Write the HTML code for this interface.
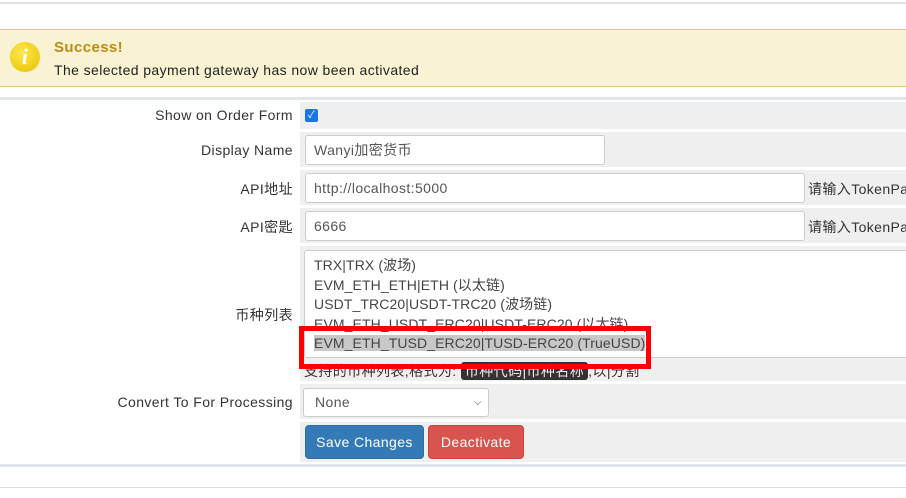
<!DOCTYPE html>
<html><head><meta charset="utf-8"><style>
*{box-sizing:border-box;margin:0;padding:0}
body{width:906px;height:498px;background:#fff;font-family:"Liberation Sans","Noto Sans CJK SC",sans-serif;font-size:14px;color:#333;position:relative;overflow:hidden;letter-spacing:0.4px}
.a{position:absolute}
.lbl{position:absolute;left:0;width:293px;text-align:right;font-size:14px;color:#333}
.cell{position:absolute;left:300px;width:606px;background:#efefef}
.inp{position:absolute;background:#fff;border:1px solid #ccc;border-radius:3px;font-size:14px;color:#555;padding-left:8px}
.tp{position:absolute;left:808px;font-size:14px;color:#333;white-space:nowrap}
</style></head><body>
<div class="a" style="left:0;top:2px;width:906px;height:2px;background:#e4e4e4"></div>
<div class="a" style="left:0;top:29px;width:906px;height:58px;background:#f9f3d3;border-top:1px solid #e8c878;border-bottom:1px solid #e8c878"></div>
<div class="a" style="left:10px;top:42px;width:30px;height:30px;border-radius:50%;background:radial-gradient(circle at 40% 35%,#ffe84a,#e6c000);color:#fff;font:italic bold 22px 'Liberation Serif',serif;text-align:center;line-height:30px">i</div>
<div class="a" style="left:54px;top:39px;font-size:15px;font-weight:bold;color:#c08a10">Success!</div>
<div class="a" style="left:54px;top:62px;font-size:14px;color:#222">The selected payment gateway has now been activated</div>
<div class="a" style="left:0;top:97px;width:906px;height:3px;background:#e2e6e9"></div>

<div class="lbl" style="top:107px">Show on Order Form</div>
<div class="cell" style="top:102px;height:27px"></div>
<div class="a" style="left:305px;top:109px;width:13px;height:13px;background:#1a73e8;border-radius:2px;color:#fff;font-size:10px;line-height:13px;text-align:center">✓</div>

<div class="lbl" style="top:142px">Display Name</div>
<div class="cell" style="top:132px;height:35px"></div>
<div class="inp" style="left:305px;top:135px;width:300px;height:30px;line-height:28px">Wanyi加密货币</div>

<div class="lbl" style="top:179px">API地址</div>
<div class="cell" style="top:170px;height:35px"></div>
<div class="inp" style="left:305px;top:173px;width:500px;height:30px;line-height:28px">http://localhost:5000</div>
<div class="tp" style="top:179px">请输入TokenPay</div>

<div class="lbl" style="top:217px">API密匙</div>
<div class="cell" style="top:208px;height:35px"></div>
<div class="inp" style="left:305px;top:211px;width:500px;height:30px;line-height:28px">6666</div>
<div class="tp" style="top:217px">请输入TokenPay</div>

<div class="lbl" style="top:305px">币种列表</div>
<div class="cell" style="top:246px;height:135px"></div>
<div class="inp" style="left:304px;top:250px;width:610px;height:108px;padding:5px 0 0 9px;line-height:19.5px;color:#444;overflow:hidden;letter-spacing:0.1px">
TRX|TRX (波场)<br>EVM_ETH_ETH|ETH (以太链)<br>USDT_TRC20|USDT-TRC20 (波场链)<br>EVM_ETH_USDT_ERC20|USDT-ERC20 (以太链)<br><span style="background:#c8c8c8">EVM_ETH_TUSD_ERC20|TUSD-ERC20 (TrueUSD)</span></div>
<div class="a" style="left:304px;top:361px;font-size:14px;color:#333;white-space:nowrap">支持的币种列表,格式为: <span style="background:#333;color:#eee;border-radius:3px;padding:1px 4px">币种代码|币种名称</span>,以|分割</div>
<div class="a" style="left:299px;top:326px;width:352px;height:43px;border:5px solid #f00"></div>

<div class="lbl" style="top:394px">Convert To For Processing</div>
<div class="cell" style="top:384px;height:35px"></div>
<div class="inp" style="left:303px;top:388px;width:186px;height:29px;line-height:27px;padding-left:11px">None<span style="position:absolute;right:6px;top:0;font-size:10px;color:#444">&#x2335;</span></div>

<div class="cell" style="top:422px;height:40px"></div>
<div class="a" style="left:305px;top:425px;width:119px;height:34px;background:#337ab7;border:1px solid #2e6da4;border-radius:4px;color:#fff;font-size:14px;text-align:center;line-height:32px">Save Changes</div>
<div class="a" style="left:428px;top:425px;width:96px;height:34px;background:#d9534f;border:1px solid #d43f3a;border-radius:4px;color:#fff;font-size:14px;text-align:center;line-height:32px">Deactivate</div>

<div class="a" style="left:0;top:464px;width:906px;height:3px;background:#e2e6e9"></div>
<div class="a" style="left:0;top:487px;width:906px;height:1px;background:#ddd"></div>
</body></html>
